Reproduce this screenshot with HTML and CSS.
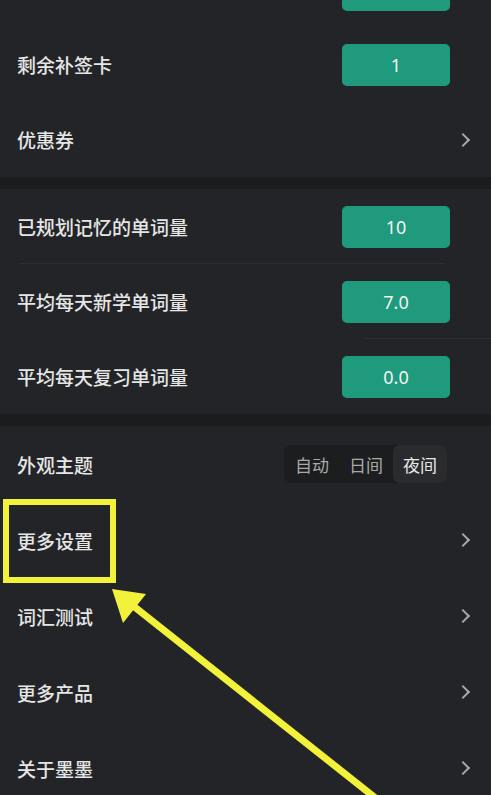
FILE: index.html
```html
<!DOCTYPE html>
<html>
<head>
  <title>设置</title>
  <link rel="stylesheet" href="styles.css">
</head>
<body>
  <div class="page">
    <div class="group first">
      <div class="row top">
        <span class="value"></span>
      </div>
      <div class="row">
        <span class="label">剩余补签卡</span>
        <span class="value">1</span>
      </div>
      <div class="row">
        <span class="label">优惠券</span>
        <span class="chevron"></span>
      </div>
    </div>

    <div class="group">
      <div class="row line">
        <span class="label">已规划记忆的单词量</span>
        <span class="value">10</span>
      </div>
      <div class="row line-right">
        <span class="label">平均每天新学单词量</span>
        <span class="value">7.0</span>
      </div>
      <div class="row">
        <span class="label">平均每天复习单词量</span>
        <span class="value">0.0</span>
      </div>
    </div>

    <div class="group last">
      <div class="row">
        <span class="label">外观主题</span>
        <div class="theme-switch">
          <span class="option">自动</span>
          <span class="option">日间</span>
          <span class="option active">夜间</span>
        </div>
      </div>
      <div class="row">
        <span class="label">更多设置</span>
        <span class="chevron"></span>
      </div>
      <div class="row">
        <span class="label">词汇测试</span>
        <span class="chevron"></span>
      </div>
      <div class="row">
        <span class="label">更多产品</span>
        <span class="chevron"></span>
      </div>
      <div class="row">
        <span class="label">关于墨墨</span>
        <span class="chevron"></span>
      </div>
    </div>

    <div class="mark-box"></div>
    <svg class="mark-arrow" width="491" height="795" viewBox="0 0 491 795">
      <line x1="122" y1="597" x2="378" y2="800" stroke="#f2f23a" stroke-width="7"/>
      <polygon points="112,589 146,594 123,623" fill="#f2f23a"/>
    </svg>
  </div>
</body>
</html>
```

FILE: styles.css
```css
body {
  margin: 0;
  background-color: #1b1c1e;
  font-family: "Noto Sans CJK SC", "Noto Sans", sans-serif;
  overflow: hidden;
}

.page {
  position: relative;
  width: 491px;
  height: 795px;
  overflow: hidden;
}

.group {
  background-color: #232427;
  margin-bottom: 12px;
}

.group.first {
  margin-top: -48px;
}

.row {
  position: relative;
  height: 75px;
  display: flex;
  align-items: center;
  justify-content: space-between;
  padding: 0 41px 0 17px;
}

.row.top {
  justify-content: flex-end;
}

.group.last .row {
  height: 76px;
}

.row.line::after {
  content: "";
  position: absolute;
  left: 20px;
  right: 46px;
  bottom: 0;
  height: 1px;
  background-color: #2c2e31;
}

.row.line-right::after {
  content: "";
  position: absolute;
  left: 363px;
  right: 0;
  bottom: 0;
  height: 1px;
  background-color: #2c2e31;
}

.label {
  color: #e6e6e6;
  font-size: 19px;
  font-weight: 500;
}

.value {
  width: 108px;
  height: 42px;
  border-radius: 5px;
  background-color: #1f9a7d;
  color: #f2f2f2;
  font-size: 18px;
  display: flex;
  align-items: center;
  justify-content: center;
  font-family: "Noto Sans", sans-serif;
}

.chevron {
  width: 8px;
  height: 8px;
  border-top: 2px solid #a8a8a8;
  border-right: 2px solid #a8a8a8;
  transform: rotate(45deg);
  margin-right: -18px;
}

.theme-switch {
  display: flex;
  background-color: #1c1d1f;
  border-radius: 8px;
  height: 38px;
  margin-right: 3px;
}

.option {
  display: flex;
  align-items: center;
  padding: 0 10px;
  color: #a9a9a9;
  font-size: 17px;
  border-radius: 7px;
}

.option:first-child {
  padding-left: 11px;
}

.option.active {
  background-color: #2a2b2e;
  color: #e8e8e8;
}

.mark-box {
  position: absolute;
  left: 3px;
  top: 499px;
  width: 101px;
  height: 72px;
  border: 6px solid #f2f23a;
}

.mark-arrow {
  position: absolute;
  left: 0;
  top: 0;
}
```
